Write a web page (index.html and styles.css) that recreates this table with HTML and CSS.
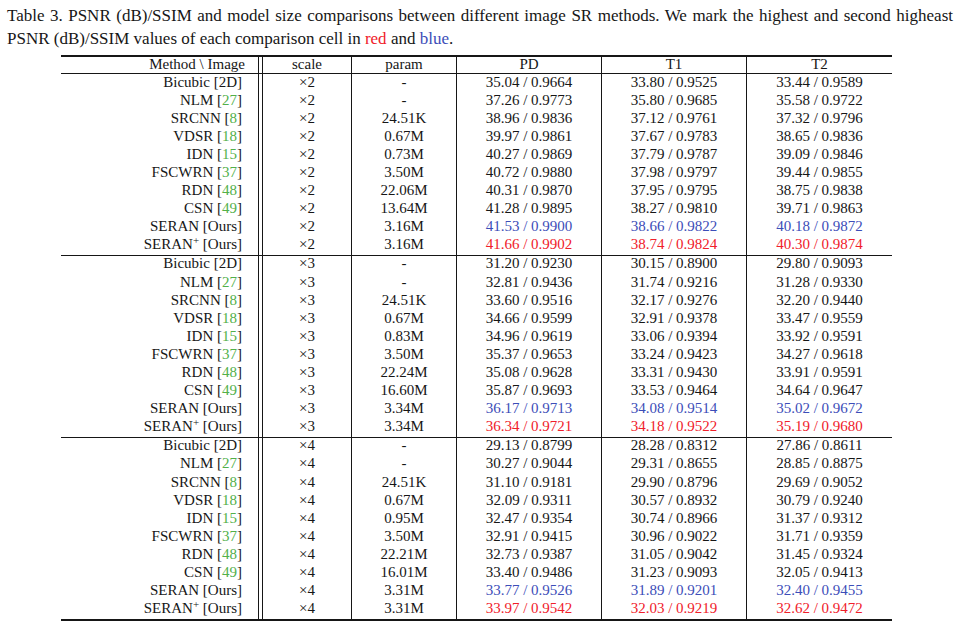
FILE: index.html
```html
<!DOCTYPE html>
<html>
<head>
<meta charset="utf-8">
<link rel="stylesheet" href="styles.css">
</head>
<body>
<p class="caption">Table 3. PSNR (dB)/SSIM and model size comparisons between different image SR methods. We mark the highest and second higheast PSNR (dB)/SSIM values of each comparison cell in <span class="red">red</span> and <span class="blue">blue</span>.</p>
<table class="results">
<colgroup>
<col class="c-method"><col class="c-gap"><col class="c-scale"><col class="c-param"><col class="c-val"><col class="c-val"><col class="c-last">
</colgroup>
<thead>
<tr><th class="method">Method \ Image</th><th class="gap"></th><th>scale</th><th>param</th><th>PD</th><th>T1</th><th class="last">T2</th></tr>
</thead>
<tbody>
<tr><td class="method">Bicubic [2D]</td><td class="gap"></td><td>×2</td><td>-</td><td>35.04 / 0.9664</td><td>33.80 / 0.9525</td><td class="last">33.44 / 0.9589</td></tr>
<tr><td class="method">NLM [<span class="cite">27</span>]</td><td class="gap"></td><td>×2</td><td>-</td><td>37.26 / 0.9773</td><td>35.80 / 0.9685</td><td class="last">35.58 / 0.9722</td></tr>
<tr><td class="method">SRCNN [<span class="cite">8</span>]</td><td class="gap"></td><td>×2</td><td>24.51K</td><td>38.96 / 0.9836</td><td>37.12 / 0.9761</td><td class="last">37.32 / 0.9796</td></tr>
<tr><td class="method">VDSR [<span class="cite">18</span>]</td><td class="gap"></td><td>×2</td><td>0.67M</td><td>39.97 / 0.9861</td><td>37.67 / 0.9783</td><td class="last">38.65 / 0.9836</td></tr>
<tr><td class="method">IDN [<span class="cite">15</span>]</td><td class="gap"></td><td>×2</td><td>0.73M</td><td>40.27 / 0.9869</td><td>37.79 / 0.9787</td><td class="last">39.09 / 0.9846</td></tr>
<tr><td class="method">FSCWRN [<span class="cite">37</span>]</td><td class="gap"></td><td>×2</td><td>3.50M</td><td>40.72 / 0.9880</td><td>37.98 / 0.9797</td><td class="last">39.44 / 0.9855</td></tr>
<tr><td class="method">RDN [<span class="cite">48</span>]</td><td class="gap"></td><td>×2</td><td>22.06M</td><td>40.31 / 0.9870</td><td>37.95 / 0.9795</td><td class="last">38.75 / 0.9838</td></tr>
<tr><td class="method">CSN [<span class="cite">49</span>]</td><td class="gap"></td><td>×2</td><td>13.64M</td><td>41.28 / 0.9895</td><td>38.27 / 0.9810</td><td class="last">39.71 / 0.9863</td></tr>
<tr><td class="method">SERAN [Ours]</td><td class="gap"></td><td>×2</td><td>3.16M</td><td class="blue">41.53 / 0.9900</td><td class="blue">38.66 / 0.9822</td><td class="last blue">40.18 / 0.9872</td></tr>
<tr><td class="method">SERAN<sup class="plus">+</sup> [Ours]</td><td class="gap"></td><td>×2</td><td>3.16M</td><td class="red">41.66 / 0.9902</td><td class="red">38.74 / 0.9824</td><td class="last red">40.30 / 0.9874</td></tr>
</tbody>
<tbody class="section">
<tr><td class="method">Bicubic [2D]</td><td class="gap"></td><td>×3</td><td>-</td><td>31.20 / 0.9230</td><td>30.15 / 0.8900</td><td class="last">29.80 / 0.9093</td></tr>
<tr><td class="method">NLM [<span class="cite">27</span>]</td><td class="gap"></td><td>×3</td><td>-</td><td>32.81 / 0.9436</td><td>31.74 / 0.9216</td><td class="last">31.28 / 0.9330</td></tr>
<tr><td class="method">SRCNN [<span class="cite">8</span>]</td><td class="gap"></td><td>×3</td><td>24.51K</td><td>33.60 / 0.9516</td><td>32.17 / 0.9276</td><td class="last">32.20 / 0.9440</td></tr>
<tr><td class="method">VDSR [<span class="cite">18</span>]</td><td class="gap"></td><td>×3</td><td>0.67M</td><td>34.66 / 0.9599</td><td>32.91 / 0.9378</td><td class="last">33.47 / 0.9559</td></tr>
<tr><td class="method">IDN [<span class="cite">15</span>]</td><td class="gap"></td><td>×3</td><td>0.83M</td><td>34.96 / 0.9619</td><td>33.06 / 0.9394</td><td class="last">33.92 / 0.9591</td></tr>
<tr><td class="method">FSCWRN [<span class="cite">37</span>]</td><td class="gap"></td><td>×3</td><td>3.50M</td><td>35.37 / 0.9653</td><td>33.24 / 0.9423</td><td class="last">34.27 / 0.9618</td></tr>
<tr><td class="method">RDN [<span class="cite">48</span>]</td><td class="gap"></td><td>×3</td><td>22.24M</td><td>35.08 / 0.9628</td><td>33.31 / 0.9430</td><td class="last">33.91 / 0.9591</td></tr>
<tr><td class="method">CSN [<span class="cite">49</span>]</td><td class="gap"></td><td>×3</td><td>16.60M</td><td>35.87 / 0.9693</td><td>33.53 / 0.9464</td><td class="last">34.64 / 0.9647</td></tr>
<tr><td class="method">SERAN [Ours]</td><td class="gap"></td><td>×3</td><td>3.34M</td><td class="blue">36.17 / 0.9713</td><td class="blue">34.08 / 0.9514</td><td class="last blue">35.02 / 0.9672</td></tr>
<tr><td class="method">SERAN<sup class="plus">+</sup> [Ours]</td><td class="gap"></td><td>×3</td><td>3.34M</td><td class="red">36.34 / 0.9721</td><td class="red">34.18 / 0.9522</td><td class="last red">35.19 / 0.9680</td></tr>
</tbody>
<tbody class="section final">
<tr><td class="method">Bicubic [2D]</td><td class="gap"></td><td>×4</td><td>-</td><td>29.13 / 0.8799</td><td>28.28 / 0.8312</td><td class="last">27.86 / 0.8611</td></tr>
<tr><td class="method">NLM [<span class="cite">27</span>]</td><td class="gap"></td><td>×4</td><td>-</td><td>30.27 / 0.9044</td><td>29.31 / 0.8655</td><td class="last">28.85 / 0.8875</td></tr>
<tr><td class="method">SRCNN [<span class="cite">8</span>]</td><td class="gap"></td><td>×4</td><td>24.51K</td><td>31.10 / 0.9181</td><td>29.90 / 0.8796</td><td class="last">29.69 / 0.9052</td></tr>
<tr><td class="method">VDSR [<span class="cite">18</span>]</td><td class="gap"></td><td>×4</td><td>0.67M</td><td>32.09 / 0.9311</td><td>30.57 / 0.8932</td><td class="last">30.79 / 0.9240</td></tr>
<tr><td class="method">IDN [<span class="cite">15</span>]</td><td class="gap"></td><td>×4</td><td>0.95M</td><td>32.47 / 0.9354</td><td>30.74 / 0.8966</td><td class="last">31.37 / 0.9312</td></tr>
<tr><td class="method">FSCWRN [<span class="cite">37</span>]</td><td class="gap"></td><td>×4</td><td>3.50M</td><td>32.91 / 0.9415</td><td>30.96 / 0.9022</td><td class="last">31.71 / 0.9359</td></tr>
<tr><td class="method">RDN [<span class="cite">48</span>]</td><td class="gap"></td><td>×4</td><td>22.21M</td><td>32.73 / 0.9387</td><td>31.05 / 0.9042</td><td class="last">31.45 / 0.9324</td></tr>
<tr><td class="method">CSN [<span class="cite">49</span>]</td><td class="gap"></td><td>×4</td><td>16.01M</td><td>33.40 / 0.9486</td><td>31.23 / 0.9093</td><td class="last">32.05 / 0.9413</td></tr>
<tr><td class="method">SERAN [Ours]</td><td class="gap"></td><td>×4</td><td>3.31M</td><td class="blue">33.77 / 0.9526</td><td class="blue">31.89 / 0.9201</td><td class="last blue">32.40 / 0.9455</td></tr>
<tr><td class="method">SERAN<sup class="plus">+</sup> [Ours]</td><td class="gap"></td><td>×4</td><td>3.31M</td><td class="red">33.97 / 0.9542</td><td class="red">32.03 / 0.9219</td><td class="last red">32.62 / 0.9472</td></tr>
</tbody>
</table>
</body>
</html>
```

FILE: styles.css
```css
html, body {
  margin: 0;
  padding: 0;
  background: #ffffff;
}

body {
  font-family: "Liberation Serif", "Times New Roman", serif;
  color: #161616;
}

.caption {
  margin: 4px 0 0 7px;
  width: 946px;
  font-size: 17px;
  line-height: 23px;
  text-align: justify;
}

.red { color: #f0202a; }
.blue { color: #3c4db8; }
.cite { color: #52b04a; }

.results {
  margin: 5px 0 0 61px;
  width: 831px;
  table-layout: fixed;
  border-collapse: separate;
  border-spacing: 0;
  font-size: 15px;
  color: #161616;
}

.c-method { width: 198px; }
.c-gap { width: 4px; }
.c-scale { width: 89px; }
.c-param { width: 105px; }
.c-val { width: 145px; }
.c-last { width: 145px; }

.results th,
.results td {
  padding: 0;
  text-align: center;
  vertical-align: top;
  white-space: nowrap;
  border-right: 1px solid #161616;
  font-weight: normal;
}

.results th.last,
.results td.last {
  border-right: none;
}

.results th {
  border-top: 2px solid #161616;
  border-bottom: 1px solid #161616;
  line-height: 12px;
  height: 12px;
  padding-top: 1px;
  padding-bottom: 3px;
}

.results td {
  line-height: 15px;
  height: 15px;
  padding-top: 0.5px;
  padding-bottom: 2.6px;
}

.results .method {
  text-align: right;
  padding-right: 16px;
}

.results th.method {
  padding-right: 13px;
}

.results .gap {
  padding: 0;
}

.section tr:first-child td {
  border-top: 1px solid #161616;
}

.final tr:last-child td {
  border-bottom: 2px solid #161616;
}

.plus {
  font-size: 11px;
  line-height: 0;
  vertical-align: 5px;
}
```
